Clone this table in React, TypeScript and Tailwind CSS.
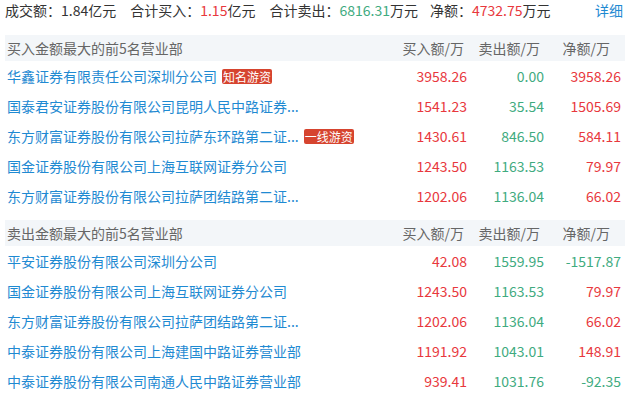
import React from "react";

type Row = { name: string; tag?: string; buy: string; sell: string; net: string; netNeg?: boolean };

const buyRows: Row[] = [
  { name: "华鑫证券有限责任公司深圳分公司", tag: "知名游资", buy: "3958.26", sell: "0.00", net: "3958.26" },
  { name: "国泰君安证券股份有限公司昆明人民中路证券...", buy: "1541.23", sell: "35.54", net: "1505.69" },
  { name: "东方财富证券股份有限公司拉萨东环路第二证...", tag: "一线游资", buy: "1430.61", sell: "846.50", net: "584.11" },
  { name: "国金证券股份有限公司上海互联网证券分公司", buy: "1243.50", sell: "1163.53", net: "79.97" },
  { name: "东方财富证券股份有限公司拉萨团结路第二证...", buy: "1202.06", sell: "1136.04", net: "66.02" },
];

const sellRows: Row[] = [
  { name: "平安证券股份有限公司深圳分公司", buy: "42.08", sell: "1559.95", net: "-1517.87", netNeg: true },
  { name: "国金证券股份有限公司上海互联网证券分公司", buy: "1243.50", sell: "1163.53", net: "79.97" },
  { name: "东方财富证券股份有限公司拉萨团结路第二证...", buy: "1202.06", sell: "1136.04", net: "66.02" },
  { name: "中泰证券股份有限公司上海建国中路证券营业部", buy: "1191.92", sell: "1043.01", net: "148.91" },
  { name: "中泰证券股份有限公司南通人民中路证券营业部", buy: "939.41", sell: "1031.76", net: "-92.35", netNeg: true },
];

function Header({ title }: { title: string }) {
  return (
    <div className="flex items-center h-[26px] bg-[#f3f6f9] text-[14px] text-[#666666]">
      <div className="flex-1 pl-[2px]">{title}</div>
      <div className="w-[77px] text-right pr-[7px]">买入额/万</div>
      <div className="w-[77px] text-right pr-[8px]">卖出额/万</div>
      <div className="w-[77px] text-right pr-[15px]">净额/万</div>
    </div>
  );
}

function DataRow({ r }: { r: Row }) {
  return (
    <div className="flex items-center h-[30px] text-[14px]">
      <div className="flex-1 flex items-center pl-[2px] min-w-0">
        <span className="text-[#1f8ad2] whitespace-nowrap">{r.name}</span>
        {r.tag && (
          <span className="ml-[5px] px-[1px] bg-[#d6442f] text-white text-[12px] leading-[15px] rounded-[2px] whitespace-nowrap">
            {r.tag}
          </span>
        )}
      </div>
      <div className="w-[77px] text-right pr-[4px] text-[#e8383d]">{r.buy}</div>
      <div className="w-[77px] text-right pr-[4px] text-[#3fab7f]">{r.sell}</div>
      <div className={`w-[77px] text-right pr-[4px] ${r.netNeg ? "text-[#3fab7f]" : "text-[#e8383d]"}`}>{r.net}</div>
    </div>
  );
}

export default function App() {
  return (
    <div
      className="w-[630px] h-[394px] overflow-hidden bg-white px-[5px]"
      style={{ fontFamily: '"Microsoft YaHei", "Noto Sans CJK SC", sans-serif' }}
    >
      <div className="flex items-center h-[20px] text-[14px] text-[#333333] whitespace-nowrap">
        <span>成交额：</span>
        <span className="text-[#333333]">1.84</span>
        <span>亿元</span>
        <span className="ml-[14px]">合计买入：</span>
        <span className="text-[#e8383d]">1.15</span>
        <span>亿元</span>
        <span className="ml-[14px]">合计卖出：</span>
        <span className="text-[#3fab7f]">6816.31</span>
        <span>万元</span>
        <span className="ml-[12px]">净额：</span>
        <span className="text-[#e8383d]">4732.75</span>
        <span>万元</span>
        <span className="ml-auto mr-[2px] text-[#1f8ad2]">详细</span>
      </div>
      <div className="mt-[15px]">
        <Header title="买入金额最大的前5名营业部" />
        {buyRows.map((r, i) => (
          <DataRow key={i} r={r} />
        ))}
      </div>
      <div className="mt-[9px]">
        <Header title="卖出金额最大的前5名营业部" />
        {sellRows.map((r, i) => (
          <DataRow key={i} r={r} />
        ))}
      </div>
    </div>
  );
}
